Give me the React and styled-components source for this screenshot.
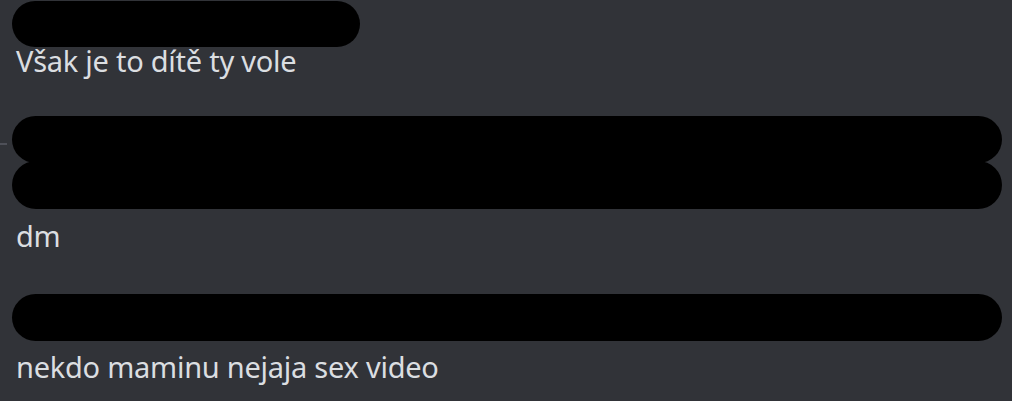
import React from "react";
import styled, { createGlobalStyle } from "styled-components";

const GlobalStyle = createGlobalStyle`
  html, body {
    margin: 0;
    padding: 0;
    background: #313338;
  }
  body {
    font-family: "Noto Sans", "Open Sans", sans-serif;
    overflow: hidden;
  }
`;

const Chat = styled.div`
  width: 1012px;
  height: 401px;
  padding: 1px 10px 0 12px;
  box-sizing: border-box;
  display: flex;
  flex-direction: column;
  position: relative;
  background: #313338;
`;

const Group = styled.div`
  display: flex;
  flex-direction: column;
  margin-top: ${p => p.$gap || 0}px;
`;

const Redaction = styled.div`
  width: ${p => (p.$width ? `${p.$width}px` : "100%")};
  height: ${p => p.$height || 46}px;
  margin-top: ${p => (p.$overlap ? -p.$overlap : 0)}px;
  background: #000;
  border-radius: 24px;
`;

const Line = styled.div`
  margin-top: ${p => p.$offset || 0}px;
  padding-left: 4px;
  font-size: 29px;
  line-height: 30px;
  letter-spacing: -0.25px;
  color: #dbdee1;
  white-space: nowrap;
`;

const DividerTick = styled.div`
  position: absolute;
  left: 0;
  top: 143px;
  width: 7px;
  height: 2px;
  background: #4e5058;
`;

export default function App() {
  return (
    <>
      <GlobalStyle />
      <Chat>
        <DividerTick />
        <Group>
          <Redaction $width={348} />
          <Line $offset={-1}>Však je to dítě ty vole</Line>
        </Group>
        <Group $gap={40}>
          <Redaction $height={47} />
          <Redaction $height={48} $overlap={2} />
          <Line $offset={12}>dm</Line>
        </Group>
        <Group $gap={43}>
          <Redaction $height={47} />
          <Line $offset={11}>nekdo maminu nejaja sex video</Line>
        </Group>
      </Chat>
    </>
  );
}
